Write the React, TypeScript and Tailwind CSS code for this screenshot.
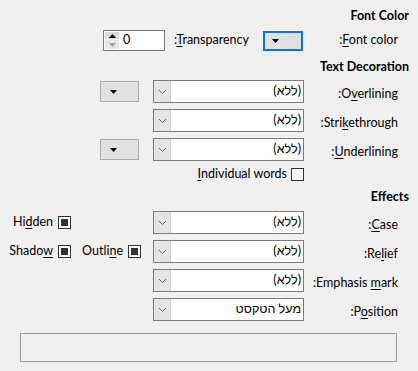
import React from "react";

const Chevron = () => (
  <svg width="9" height="6" viewBox="0 0 9 6">
    <path d="M1 1l3.5 3.5L8 1" stroke="#6a6a6a" strokeWidth="1" fill="none" />
  </svg>
);

const Tri = ({ color = "#000", up = false }: { color?: string; up?: boolean }) => (
  <svg width="7" height="4" viewBox="0 0 7 4">
    <path d={up ? "M0 4h7L3.5 0z" : "M0 0h7L3.5 4z"} fill={color} />
  </svg>
);

const Combo = ({ value }: { value: string }) => (
  <div className="flex h-[23px] w-[151px] border border-[#7a7a7a] bg-white shrink-0">
    <div className="flex-1 flex items-center pr-[2px] text-[12.5px] leading-none">{value}</div>
    <div className="w-[17px] h-full bg-[#e5e5e5] border-r border-[#cfcfcf] flex items-center justify-center">
      <Chevron />
    </div>
  </div>
);

const ColorBtn = ({ focus = false }: { focus?: boolean }) => (
  <div
    dir="ltr"
    className={
      focus
        ? "w-[40px] h-[20px] bg-[#e1e1e1] border-2 border-[#0078d7] flex items-center pl-[7px] shrink-0"
        : "w-[39px] h-[21px] bg-[#e1e1e1] border border-[#adadad] flex items-center pl-[9px] shrink-0"
    }
  >
    <Tri />
  </div>
);

const Check = ({ mixed = false }: { mixed?: boolean }) => (
  <div className="w-[13px] h-[13px] border border-[#333333] bg-white flex items-center justify-center shrink-0">
    {mixed && <div className="w-[7px] h-[7px] bg-[#333333]" />}
  </div>
);

const Label = ({ pre, u, post, colon = false }: { pre: string; u: string; post: string; colon?: boolean }) => (
  <span dir="ltr" className="text-[12.5px] whitespace-nowrap inline-block">
    {colon ? ":" : ""}
    {pre}
    <span className="underline underline-offset-[2px]">{u}</span>
    {post}
  </span>
);

const Header = ({ children, cls }: { children: React.ReactNode; cls: string }) => (
  <div className={"h-[16px] flex items-center pr-[9px] font-bold text-[12.5px] " + cls}>{children}</div>
);

const CheckLabel = ({ mixed, pre, u, post }: { mixed?: boolean; pre: string; u: string; post: string }) => (
  <div className="flex items-center gap-[5px]">
    <Check mixed={mixed} />
    <Label pre={pre} u={u} post={post} />
  </div>
);

export default function App() {
  return (
    <div
      dir="rtl"
      className="w-[418px] h-[371px] bg-[#f0f0f0] text-[#000] overflow-hidden"
      style={{ fontFamily: 'Lato, "Liberation Sans", "DejaVu Sans", sans-serif' }}
    >
      <div className="pt-[8px]" />
      <Header cls="">Font Color</Header>

      <div className="mt-[6px] h-[21px] flex items-center pr-[20px]">
        <div className="w-[95px] flex items-center">
          <Label colon pre="" u="F" post="ont color" />
        </div>
        <ColorBtn focus />
        <div className="mr-[14px] flex items-center">
          <Label colon pre="" u="T" post="ransparency" />
        </div>
        <div
          dir="ltr"
          className="mr-auto ml-[103px] w-[62px] h-[21px] border border-[#7a7a7a] bg-white flex items-center pl-[1px]"
        >
          <div className="flex flex-col w-[14px] h-[17px]">
            <div className="h-[8px] bg-[#dcdcdc] flex items-center justify-center border-b border-[#f0f0f0]">
              <Tri up />
            </div>
            <div className="h-[9px] bg-[#e8e8e8] flex items-center justify-center">
              <Tri color="#a0a0a0" />
            </div>
          </div>
          <span className="ml-[4px] text-[12.5px]">0</span>
        </div>
      </div>

      <Header cls="mt-[8px]">Text Decoration</Header>

      <div className="pr-[20px]">
        <div className="mt-[5px] h-[23px] flex items-center">
          <div className="w-[94px]">
            <Label colon pre="O" u="v" post="erlining" />
          </div>
          <Combo value="(ללא)" />
          <div className="mr-[14px]">
            <ColorBtn />
          </div>
        </div>
        <div className="mt-[6px] h-[23px] flex items-center">
          <div className="w-[94px]">
            <Label colon pre="Stri" u="k" post="ethrough" />
          </div>
          <Combo value="(ללא)" />
        </div>
        <div className="mt-[6px] h-[23px] flex items-center">
          <div className="w-[94px]">
            <Label colon pre="" u="U" post="nderlining" />
          </div>
          <Combo value="(ללא)" />
          <div className="mr-[14px]">
            <ColorBtn />
          </div>
        </div>
        <div className="mt-[5px] h-[16px] flex items-center">
          <div className="w-[94px]" />
          <div className="flex items-center gap-[4px]">
            <Check />
            <Label pre="" u="I" post="ndividual words" />
          </div>
        </div>
      </div>

      <Header cls="mt-[7px]">Effects</Header>

      <div className="pr-[20px]">
        <div className="mt-[6px] h-[23px] flex items-center">
          <div className="w-[94px]">
            <Label colon pre="" u="C" post="ase" />
          </div>
          <Combo value="(ללא)" />
          <div className="mr-[12px] w-[67px]" />
          <div className="mr-[3px] w-[71px] flex">
            <CheckLabel mixed pre="Hi" u="d" post="den" />
          </div>
        </div>
        <div className="mt-[6px] h-[23px] flex items-center">
          <div className="w-[94px]">
            <Label colon pre="Re" u="l" post="ief" />
          </div>
          <Combo value="(ללא)" />
          <div className="mr-[12px] w-[67px] flex">
            <CheckLabel mixed pre="Outli" u="n" post="e" />
          </div>
          <div className="mr-[3px] w-[71px] flex">
            <CheckLabel mixed pre="Shado" u="w" post="" />
          </div>
        </div>
        <div className="mt-[6px] h-[23px] flex items-center">
          <div className="w-[94px]">
            <Label colon pre="Emphasis " u="m" post="ark" />
          </div>
          <Combo value="(ללא)" />
        </div>
        <div className="mt-[6px] h-[23px] flex items-center">
          <div className="w-[94px]">
            <Label colon pre="P" u="o" post="sition" />
          </div>
          <Combo value="מעל הטקסט" />
        </div>
      </div>

      <div className="mt-[12px] mr-[21px] ml-[20px] h-[29px] border border-[#a0a0a0] bg-[#f0f0f0]" />
    </div>
  );
}
